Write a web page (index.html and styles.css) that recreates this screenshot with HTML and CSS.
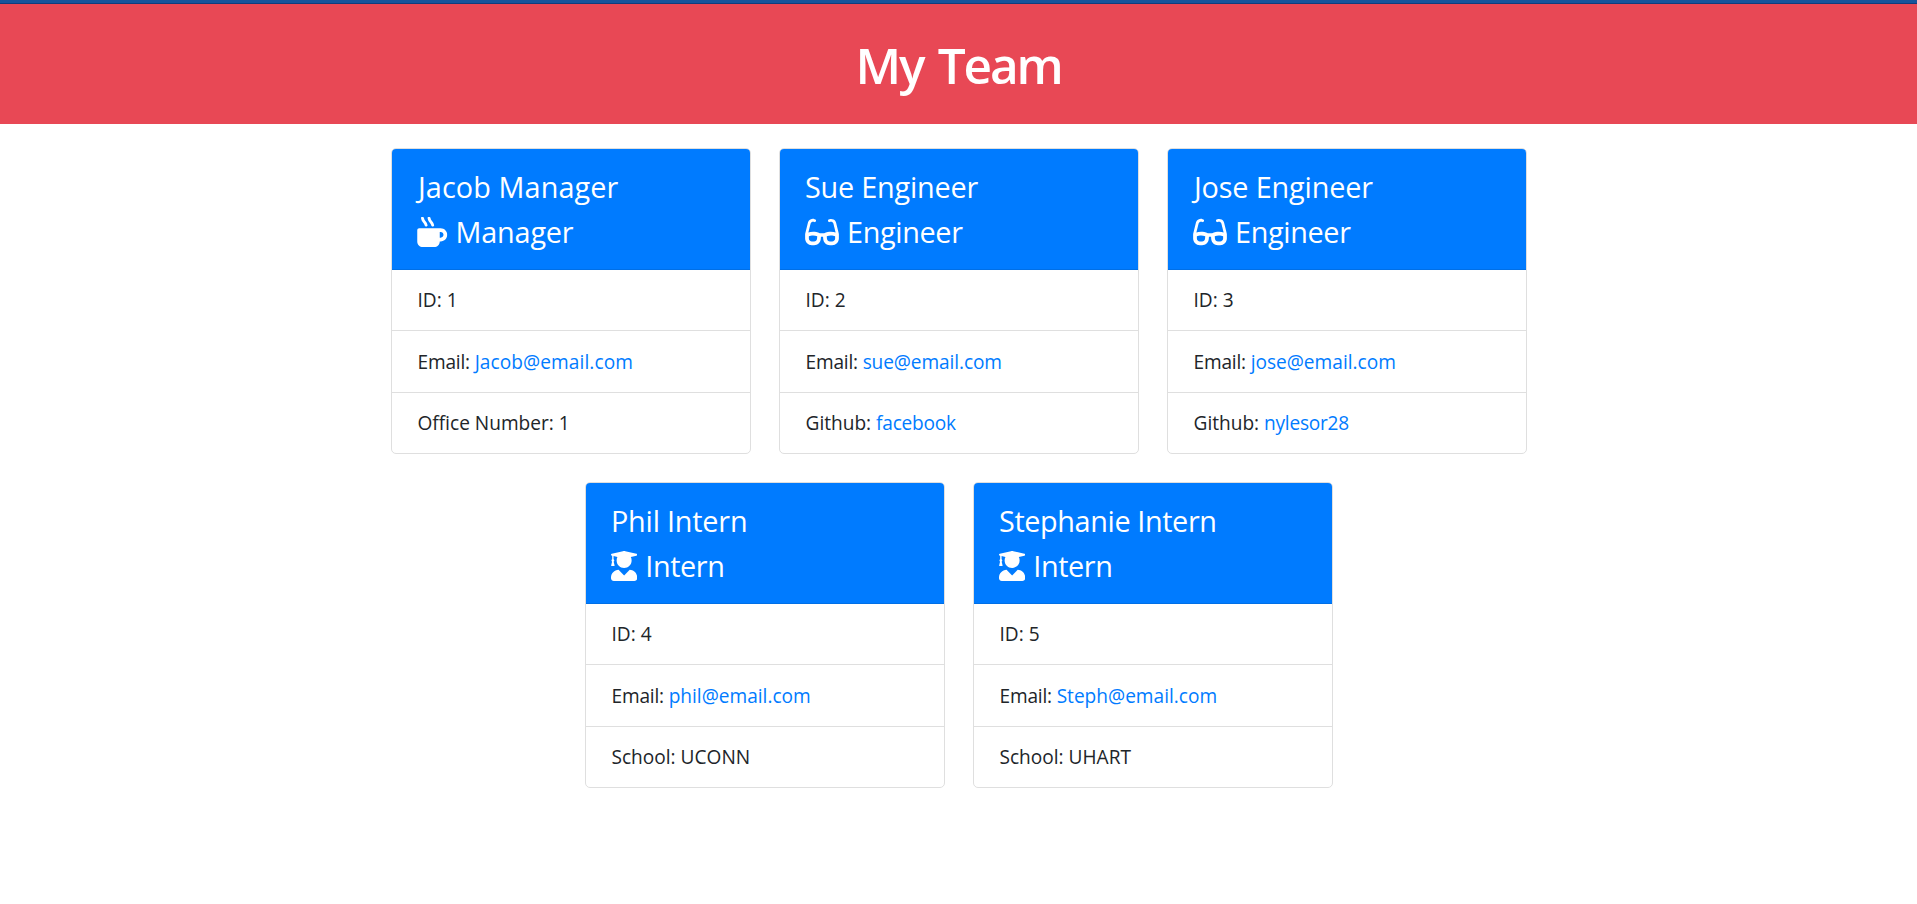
FILE: index.html
```html
<!DOCTYPE html>
<html lang="en">
<head>
<meta charset="utf-8">
<title>My Team</title>
<link rel="stylesheet" href="styles.css">
</head>
<body>
<svg class="sprite" aria-hidden="true">
  <symbol id="mug" viewBox="0 0 512 512"><path d="M127.1 146.5c1.3 7.7 8 13.5 16 13.5h16.5c9.8 0 17.6-8.5 16.3-18-3.8-28.2-16.4-54.2-36.6-74.7-14.4-14.7-23.6-33.3-26.4-53.5C111.8 5.9 105 0 96.8 0H80.4C70.6 0 63 8.5 64.1 18c3.9 31.9 18 61.3 40.6 84.4 12 12.2 19.7 27.5 22.4 44.1zm112 0c1.3 7.7 8 13.5 16 13.5h16.5c9.8 0 17.6-8.5 16.3-18-3.8-28.2-16.4-54.2-36.6-74.7-14.4-14.7-23.6-33.3-26.4-53.5C223.8 5.9 217 0 208.8 0h-16.4c-9.8 0-17.5 8.5-16.3 18 3.9 31.9 18 61.3 40.6 84.4 12 12.2 19.7 27.5 22.4 44.1zM400 192H32c-17.7 0-32 14.3-32 32v192c0 53 43 96 96 96h192c53 0 96-43 96-96h16c61.8 0 112-50.2 112-112s-50.2-112-112-112zm0 160h-16v-96h16c26.5 0 48 21.5 48 48s-21.5 48-48 48z"/></symbol>
  <symbol id="glasses" viewBox="0 0 576 512"><path d="M574.1 280.37L528.75 98.66c-5.91-23.7-21.59-44.05-43-55.81-21.44-11.73-46.97-14.11-70.19-6.33l-15.25 5.08c-8.39 2.79-12.92 11.86-10.12 20.24l5.06 15.18c2.79 8.38 11.85 12.91 20.23 10.12l13.18-4.39c10.87-3.62 23-3.57 33.16 1.73 10.29 5.37 17.57 14.56 20.37 25.82l38.46 153.82c-22.19-6.81-49.79-12.46-81.2-12.46-34.77 0-73.98 7.02-114.85 26.74h-73.18c-40.87-19.74-80.08-26.75-114.86-26.75-31.42 0-59.02 5.65-81.21 12.46l38.46-153.83c2.79-11.25 10.09-20.45 20.38-25.81 10.16-5.3 22.28-5.35 33.15-1.73l13.17 4.39c8.38 2.79 17.44-1.74 20.23-10.12l5.06-15.18c2.8-8.38-1.73-17.45-10.12-20.24l-15.25-5.08c-23.22-7.78-48.75-5.41-70.19 6.33-21.41 11.77-37.09 32.11-43 55.8L1.9 280.37A64.218 64.218 0 0 0 0 295.86v70.25C0 429.01 51.58 480 115.2 480h37.12c60.28 0 110.37-45.94 114.88-105.37l2.93-38.63h35.75l2.93 38.63C313.31 434.06 363.4 480 423.68 480h37.12c63.62 0 115.2-50.99 115.2-113.88v-70.25c0-5.23-.64-10.43-1.9-15.5zm-370.72 89.42c-1.97 25.91-24.4 46.21-51.06 46.21H115.2C86.97 416 64 393.62 64 366.11v-37.54c18.12-6.49 43.42-12.92 72.58-12.92 23.86 0 47.26 4.33 69.93 12.92l-3.13 41.22zM512 366.12c0 27.51-22.97 49.88-51.2 49.88h-37.12c-26.67 0-49.1-20.3-51.06-46.21l-3.13-41.22c22.67-8.59 46.08-12.92 69.95-12.92 29.12 0 54.43 6.44 72.55 12.93v37.54z"/></symbol>
  <symbol id="graduate" viewBox="0 0 448 512"><path d="M319.4 320.6L224 416l-95.4-95.4C57.1 323.7 0 382.2 0 454.4v9.6c0 26.5 21.5 48 48 48h352c26.5 0 48-21.5 48-48v-9.6c0-72.2-57.1-130.7-128.6-133.8zM13.6 79.8l6.4 1.5v58.4c-7 4.2-12 11.5-12 20.3 0 8.4 4.6 15.4 11.1 19.7L3.5 242c-1.7 6.9 2.1 14 7.6 14h41.8c5.5 0 9.3-7.1 7.6-14l-15.6-62.3C51.4 175.4 56 168.4 56 160c0-8.8-5-16.1-12-20.3V87.1l66 15.9c-8.6 17.2-14 36.4-14 57 0 70.7 57.3 128 128 128s128-57.3 128-128c0-20.6-5.3-39.8-14-57l96.3-23.2c18.2-4.4 18.2-27.1 0-31.5l-190.4-46c-13-3.1-26.7-3.1-39.7 0L13.6 48.2c-18.1 4.4-18.1 27.2 0 31.6z"/></symbol>
</svg>

<header class="banner"><h1 class="banner-title">My Team</h1></header>

<main class="team">
  <article class="card">
    <div class="card-head">
      <h2 class="name name-j">Jacob Manager</h2>
      <h3 class="role role-manager"><svg class="icon icon-mug"><use href="#mug"/></svg>Manager</h3>
    </div>
    <ul class="details">
      <li class="row row-id">ID: 1</li>
      <li class="row"><span class="label">Email: </span><a class="link link-jacob">Jacob@email.com</a></li>
      <li class="row">Office Number: 1</li>
    </ul>
  </article>

  <article class="card">
    <div class="card-head">
      <h2 class="name">Sue Engineer</h2>
      <h3 class="role role-engineer"><svg class="icon icon-glasses"><use href="#glasses"/></svg>Engineer</h3>
    </div>
    <ul class="details">
      <li class="row row-id">ID: 2</li>
      <li class="row"><span class="label">Email: </span><a class="link link-sue">sue@email.com</a></li>
      <li class="row">Github: <a class="link link-github">facebook</a></li>
    </ul>
  </article>

  <article class="card">
    <div class="card-head">
      <h2 class="name name-j name-jose">Jose Engineer</h2>
      <h3 class="role role-engineer"><svg class="icon icon-glasses"><use href="#glasses"/></svg>Engineer</h3>
    </div>
    <ul class="details">
      <li class="row row-id">ID: 3</li>
      <li class="row"><span class="label">Email: </span><a class="link">jose@email.com</a></li>
      <li class="row">Github: <a class="link link-github">nylesor28</a></li>
    </ul>
  </article>

  <article class="card">
    <div class="card-head">
      <h2 class="name">Phil Intern</h2>
      <h3 class="role role-intern"><svg class="icon icon-graduate"><use href="#graduate"/></svg>Intern</h3>
    </div>
    <ul class="details">
      <li class="row row-id">ID: 4</li>
      <li class="row"><span class="label">Email: </span><a class="link">phil@email.com</a></li>
      <li class="row">School: UCONN</li>
    </ul>
  </article>

  <article class="card">
    <div class="card-head">
      <h2 class="name name-long">Stephanie Intern</h2>
      <h3 class="role role-intern"><svg class="icon icon-graduate"><use href="#graduate"/></svg>Intern</h3>
    </div>
    <ul class="details">
      <li class="row row-id">ID: 5</li>
      <li class="row"><span class="label">Email: </span><a class="link">Steph@email.com</a></li>
      <li class="row">School: UHART</li>
    </ul>
  </article>
</main>
</body>
</html>
```
FILE: styles.css
```css
* { box-sizing: border-box; }

body {
  margin: 0;
  background: #fff;
  color: #212529;
  font: 400 19.1px/30px "Open Sans", "Noto Sans", sans-serif;
}

.sprite { display: none; }

.banner {
  height: 124px;
  padding-top: 35px;
  background: linear-gradient(#17549b 3px, #113c7c 3px, #113c7c 4px, #e84855 4px);
  text-align: center;
}

.banner-title {
  margin: 0;
  color: #fff;
  font-size: 49.5px;
  font-weight: 600;
  line-height: 60px;
  letter-spacing: -2.2px;
  word-spacing: 4px;
}

.team {
  display: flex;
  flex-wrap: wrap;
  justify-content: center;
  gap: 28px;
  width: 1164px;
  margin: 24px auto 0;
}

.card {
  width: 360px;
  height: 306px;
  border: 1px solid #dfdfdf;
  border-radius: 5px;
  overflow: hidden;
}

.card-head {
  height: 121px;
  padding: 15px 25px 15px 25.5px;
  border-bottom: 1px solid #006fe6;
  background: #007bff;
  color: #fff;
}

.name, .role {
  margin: 0;
  font-size: 28.8px;
  font-weight: 400;
  line-height: 45px;
  white-space: nowrap;
}

.name { letter-spacing: -.2px; }
.name-j { text-indent: 1px; letter-spacing: .1px; }
.name-jose { letter-spacing: -.15px; }
.name-long { letter-spacing: -.38px; }

.role { display: flex; gap: 8px; }
.role-manager { letter-spacing: -.17px; }
.role-engineer { letter-spacing: -.34px; }
.role-intern { letter-spacing: -.4px; }

.icon { height: 30px; margin-top: 8px; fill: #fff; }
.icon-mug { width: 30.5px; }
.icon-glasses { width: 34px; }
.icon-graduate { width: 26.25px; }

.details { margin: 0; padding: 0; list-style: none; }

.row { padding: 15px 25px 15px 26px; }
.row-id { height: 61px; border-bottom: 1px solid #dfdfdf; }
.row-id + .row { height: 62px; padding-top: 16px; border-bottom: 1px solid #dfdfdf; }

.label { letter-spacing: -.2px; }
.link { color: #007bff; }
.link-jacob { letter-spacing: .08px; }
.link-sue { letter-spacing: -.1px; }
.link-github { letter-spacing: -.25px; }
```
